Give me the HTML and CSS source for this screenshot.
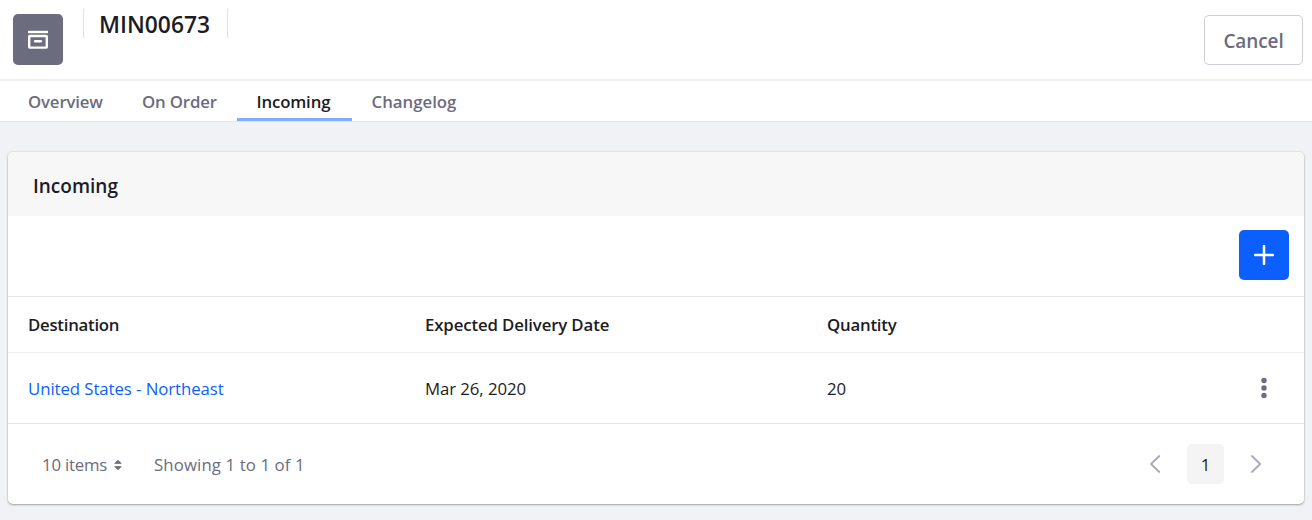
FILE: index.html
```html
<!DOCTYPE html>
<html lang="en">
<head>
<meta charset="utf-8">
<title>MIN00673</title>
<link rel="stylesheet" href="styles.css">
</head>
<body>
<header class="header">
  <div class="badge">
    <svg width="22" height="20" viewBox="0 0 22 20" fill="none"><path d="M1 2h20" stroke="#fff" stroke-width="2.4"/><rect x="2.200" y="6" width="17.600" height="11.600" rx=".6" stroke="#fff" stroke-width="2.4"/><path d="M8.200 11.300h5.600" stroke="#fff" stroke-width="2.5" stroke-linecap="round"/></svg>
  </div>
  <div class="title-wrap"><h1 class="title">MIN00673</h1></div>
  <button class="cancel"><span class="cancel-text">Cancel</span></button>
</header>
<nav class="tabs">
  <a class="tab tab-overview">Overview</a>
  <a class="tab tab-order">On Order</a>
  <a class="tab tab-incoming active">Incoming</a>
  <a class="tab tab-log">Changelog</a>
</nav>
<main class="card">
  <h2 class="card-header"><span>Incoming</span></h2>
  <div class="toolbar">
    <button class="add"><svg width="20" height="20" viewBox="0 0 20 20"><path d="M10 1v18M1 10h18" stroke="#fff" stroke-width="2.5" stroke-linecap="round"/></svg></button>
  </div>
  <div class="row row-head">
    <div><span class="th-dest">Destination</span></div>
    <div><span class="th-date">Expected Delivery Date</span></div>
    <div><span class="th-qty">Quantity</span></div>
    <div></div>
  </div>
  <div class="row row-body">
    <div><a class="link">United States - Northeast</a></div>
    <div><span class="date">Mar 26, 2020</span></div>
    <div><span class="qty">20</span></div>
    <div class="more"><svg width="6" height="22" viewBox="0 0 6 22" fill="#6b6c7e"><circle cx="3" cy="3.5" r="2.7"/><circle cx="3" cy="11" r="2.7"/><circle cx="3" cy="18.5" r="2.7"/></svg></div>
  </div>
  <footer class="footer">
    <span class="items">10 items</span>
    <svg class="sort" width="8" height="12" viewBox="0 0 8 12" fill="#6b6c7e"><path d="M4 1.200 7.200 4.4H.8zM4 10.800.8 7.600h6.4z" stroke="#6b6c7e" stroke-width=".8" stroke-linejoin="round"/></svg>
    <span class="showing">Showing 1 to 1 of 1</span>
    <div class="pager">
      <svg width="12" height="20" viewBox="0 0 12 20" fill="none"><path d="M10.300 2 2 10l8.300 8" stroke="#a7a9bc" stroke-width="1.8" stroke-linecap="round" stroke-linejoin="round"/></svg>
      <span class="page">1</span>
      <svg width="12" height="20" viewBox="0 0 12 20" fill="none"><path d="M1.900 2 10.200 10l-8.300 8" stroke="#a7a9bc" stroke-width="1.8" stroke-linecap="round" stroke-linejoin="round"/></svg>
    </div>
  </footer>
</main>
</body>
</html>
```
FILE: styles.css
```css
* { box-sizing: border-box; }
body {
  margin: 0;
  height: 520px;
  overflow: hidden;
  background: #f1f2f5;
  color: #1c1c24;
  font: 400 16.800px/24px "Open Sans", "Noto Sans", sans-serif;
  white-space: nowrap;
}
h1, h2 { margin: 0; }
button { padding: 0; font: inherit; }
svg { display: block; flex: none; }
.header {
  display: flex;
  align-items: flex-start;
  height: 81px;
  padding: 14px 9px 0 13px;
  background: #fff;
  border-bottom: 2px solid #ededf2;
}
.badge {
  display: grid;
  place-items: center;
  width: 50px;
  height: 51px;
  border-radius: 5px;
  background: #6b6c7e;
}
.title-wrap {
  display: flex;
  align-items: center;
  width: 145px;
  height: 29px;
  margin: -5px 0 0 20px;
  padding: 3px 0 0 15px;
  border-left: 1px solid #e1e2e8;
  border-right: 1px solid #e1e2e8;
}
.title { font-size: 22.800px; font-weight: 600; line-height: 30px; }
.cancel {
  width: 99px;
  height: 50px;
  margin: 1px 0 0 auto;
  padding-top: 2px;
  border: 1px solid #cdced9;
  border-radius: 5px;
  background: #fff;
  color: #6b6c7e;
  font-size: 19px;
  font-weight: 600;
  letter-spacing: -.1px;
}
.tabs {
  display: grid;
  grid-template-columns: 114px 114.500px 115px 125px;
  height: 41px;
  padding-left: 8px;
  background: #fff;
  border-bottom: 1px solid #e4e5ea;
}
.tab { padding: 9px 0 0 20px; color: #6b6c7e; font-weight: 600; letter-spacing: -.150px; }
.tab-log { letter-spacing: 0; }
.tab.active { color: #1c1c24; border-bottom: 3px solid #80acff; }
.card {
  width: 1296px;
  height: 352px;
  margin: 30px 0 0 8px;
  border-radius: 5px;
  background: #fff;
  box-shadow: 0 1px 3px -1px rgba(0, 0, 0, .6), 0 0 2px rgba(39, 40, 51, .2);
  overflow: hidden;
}
.card-header {
  height: 64px;
  padding: 21px 25px;
  background: #f7f7f7;
  font-size: 19px;
  font-weight: 600;
  line-height: 26px;
}
.toolbar {
  display: flex;
  justify-content: flex-end;
  height: 81px;
  padding: 14px 15.500px 0 0;
  border-bottom: 1px solid #e7e7ed;
}
.add {
  display: grid;
  place-items: center;
  width: 50px;
  height: 50px;
  border: 0;
  border-radius: 5px;
  background: #0b5fff;
}
.row {
  display: grid;
  grid-template-columns: 397px 402px 1fr 48px;
  align-items: center;
  padding-left: 20px;
}
.row-head { height: 56px; border-bottom: 1px solid #f0f0f4; font-weight: 600; }
.th-dest { letter-spacing: -.260px; }
.th-date { letter-spacing: -.130px; }
.th-qty { letter-spacing: -.220px; }
.row-body { height: 71px; padding-top: 1px; border-bottom: 1px solid #e4e5ea; }
.link { color: #0b5fff; letter-spacing: -.070px; }
.date { letter-spacing: -.080px; }
.more { padding: 0 0 1px 4.500px; }
.footer {
  display: flex;
  align-items: center;
  height: 80px;
  padding: 1px 42px 0 34px;
  color: #6b6c7e;
}
.items { width: 72px; padding-top: 1px; letter-spacing: -.200px; }
.sort { margin-right: 32px; }
.showing { padding-top: 1px; letter-spacing: .110px; }
.pager { display: flex; align-items: center; gap: 26px; margin: -1px 0 0 auto; }
.page {
  width: 37px;
  height: 40px;
  border-radius: 5px;
  background: #f4f4f4;
  color: #1c1c24;
  line-height: 42px;
  text-align: center;
}
```
